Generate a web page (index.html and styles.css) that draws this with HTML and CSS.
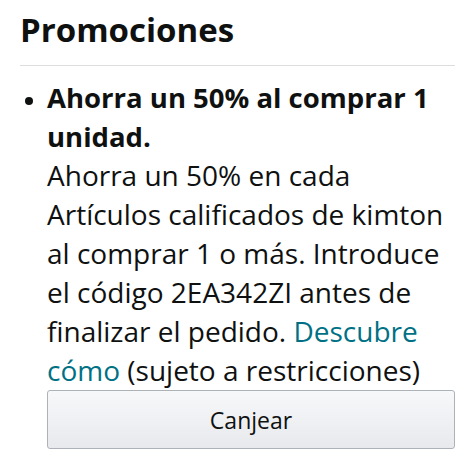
FILE: index.html
```html
<!DOCTYPE html>
<html lang="es">
<head>
    <meta charset="UTF-8">
    <meta name="viewport" content="width=device-width, initial-scale=1.0">
    <title>Promociones</title>
    <link rel="stylesheet" href="styles.css">
</head>
<body>
    <div class="promo">
        <h2 class="promo-title">Promociones</h2>
        <ul class="promo-list">
            <li>
                <b class="promo-head">Ahorra un 50% al comprar 1<br>unidad.</b>
                <p class="promo-text">Ahorra un 50% en cada<br>Artículos calificados de kimton<br>al comprar 1 o más. Introduce<br>el código 2EA342ZI antes de<br>finalizar el pedido. <a href="#">Descubre<br>cómo</a> (sujeto a restricciones)</p>
                <button class="btn">Canjear</button>
            </li>
        </ul>
    </div>
</body>
</html>
```

FILE: styles.css
```css
*{
    padding: 0;
    margin: 0;
    list-style: none;
    box-sizing: border-box;
}
body{
    background: #fff;
    color: #0f1111;
    font-family: "Open Sans", "Noto Sans", sans-serif;
}
.promo{
    padding: 10px 20px 0 20px;
}
.promo-title{
    font-size: 33px;
    font-weight: bold;
    line-height: 40px;
    padding-bottom: 15px;
    border-bottom: 1px solid #ddd;
}
.promo-list li{
    position: relative;
    padding-left: 27px;
    padding-top: 12px;
    font-size: 28px;
    line-height: 39px;
}
/* bullet */
.promo-list li::before{
    content: "";
    position: absolute;
    left: 5px;
    top: 31px;
    width: 8px;
    height: 8px;
    border-radius: 50%;
    background: #0f1111;
}
.promo-head{
    display: block;
    font-size: 27.5px;
    white-space: nowrap;
}
.promo-text{
    white-space: nowrap;
}
.promo-text a{
    color: #007185;
    text-decoration: none;
}
.btn{
    display: block;
    width: 100%;
    height: 59px;
    border: 1px solid #adb1b8;
    border-radius: 3px;
    background: linear-gradient(#f7f8fa, #e7e9ec);
    font-family: inherit;
    font-size: 23px;
    color: #0f1111;
}
```
